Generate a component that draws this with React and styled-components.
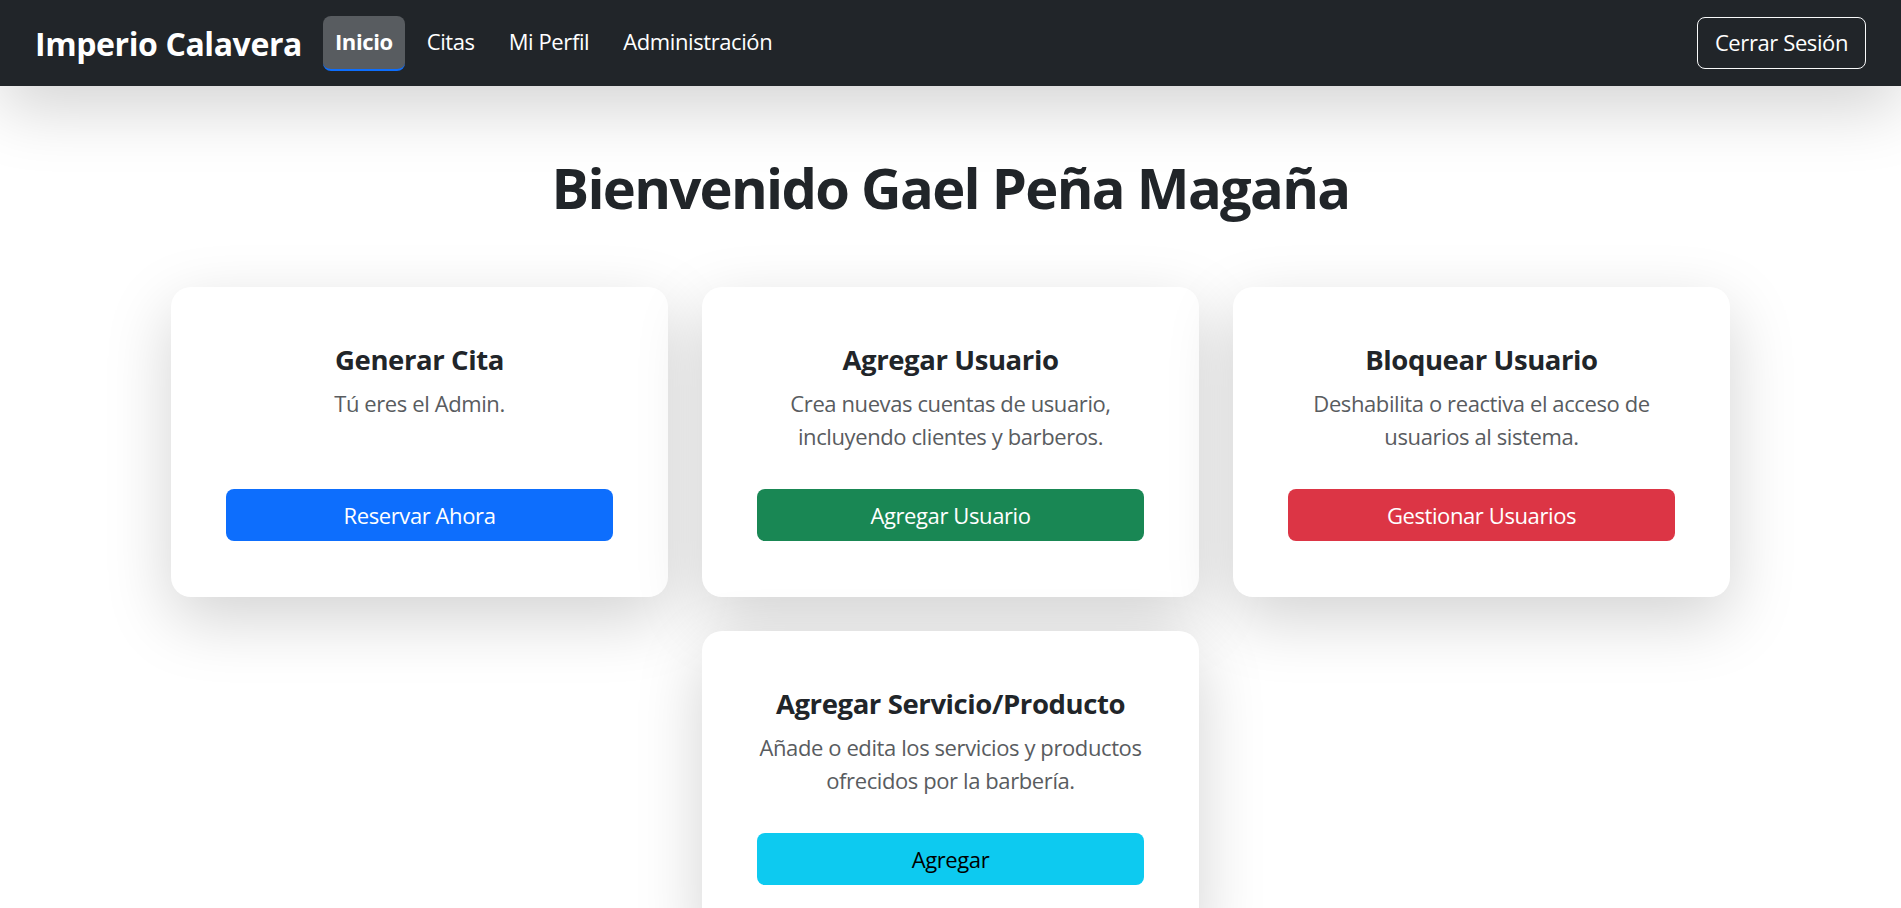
import React from "react";
import styled, { createGlobalStyle } from "styled-components";

const GlobalStyle = createGlobalStyle`
  * {
    box-sizing: border-box;
  }

  body {
    margin: 0;
    background: #ffffff;
    font-family: "Segoe UI", "Open Sans", "Noto Sans", sans-serif;
    letter-spacing: -0.025em;
    color: #212529;
  }

  button {
    letter-spacing: inherit;
  }
`;

const cards = [
  {
    title: "Generar Cita",
    text: "Tú eres el Admin.",
    action: "Reservar Ahora",
    variant: "primary",
  },
  {
    title: "Agregar Usuario",
    text: "Crea nuevas cuentas de usuario, incluyendo clientes y barberos.",
    action: "Agregar Usuario",
    variant: "success",
  },
  {
    title: "Bloquear Usuario",
    text: "Deshabilita o reactiva el acceso de usuarios al sistema.",
    action: "Gestionar Usuarios",
    variant: "danger",
  },
  {
    title: "Agregar Servicio/Producto",
    text: "Añade o edita los servicios y productos ofrecidos por la barbería.",
    action: "Agregar",
    variant: "info",
  },
];

const variants = {
  primary: { bg: "#0d6efd", color: "#ffffff" },
  success: { bg: "#198754", color: "#ffffff" },
  danger: { bg: "#dc3545", color: "#ffffff" },
  info: { bg: "#0dcaf0", color: "#000000" },
};

const links = ["Inicio", "Citas", "Mi Perfil", "Administración"];

const App = () => {
  return (
    <Page>
      <GlobalStyle />
      <Navbar>
        <Brand>Imperio Calavera</Brand>
        <NavList>
          {links.map((label, i) => (
            <NavLink key={label} $active={i === 0}>
              {label}
            </NavLink>
          ))}
        </NavList>
        <LogoutButton>Cerrar Sesión</LogoutButton>
      </Navbar>

      <Main>
        <Heading>Bienvenido Gael Peña Magaña</Heading>
        <CardGrid>
          {cards.map((card) => (
            <Card key={card.title}>
              <CardTitle>{card.title}</CardTitle>
              <CardText>{card.text}</CardText>
              <ActionButton $variant={card.variant}>{card.action}</ActionButton>
            </Card>
          ))}
        </CardGrid>
      </Main>
    </Page>
  );
};

export default App;

const Page = styled.div`
  min-height: 100vh;
  overflow: hidden;
`;

const Navbar = styled.nav`
  position: relative;
  z-index: 2;
  height: 86px;
  padding: 0 35px;
  display: flex;
  align-items: center;
  background-color: #212529;
  box-shadow: 0 22px 66px rgba(0, 0, 0, 0.175);
`;

const Brand = styled.a`
  font-size: 32px;
  font-weight: 700;
  color: #ffffff;
  margin-right: 21px;
  white-space: nowrap;
`;

const NavList = styled.div`
  display: flex;
  align-items: center;
  gap: 10px;
`;

const NavLink = styled.a`
  padding: 9px 12px 11px;
  font-size: 22px;
  line-height: 33px;
  color: #ffffff;
  border-radius: 8px;
  border-bottom: 2px solid transparent;
  font-weight: ${(p) => (p.$active ? 700 : 400)};
  background-color: ${(p) => (p.$active ? "#585c60" : "transparent")};
  border-bottom-color: ${(p) => (p.$active ? "#0d6efd" : "transparent")};
`;

const LogoutButton = styled.button`
  margin-left: auto;
  height: 52px;
  padding: 0 17px 2px;
  font-family: inherit;
  font-size: 22px;
  color: #ffffff;
  background: transparent;
  border: 1px solid #f8f9fa;
  border-radius: 8px;
`;

const Main = styled.main`
  padding-top: 68px;
  text-align: center;
`;

const Heading = styled.h1`
  margin: 0 0 66px;
  font-size: 56px;
  line-height: 1.2;
  font-weight: 700;
  letter-spacing: -0.03em;
  color: #212529;
`;

const CardGrid = styled.div`
  width: 1560px;
  margin: 0 auto;
  display: flex;
  flex-wrap: wrap;
  justify-content: center;
  gap: 34px;
`;

const Card = styled.div`
  width: 497px;
  padding: 56px 55px;
  display: flex;
  flex-direction: column;
  align-items: center;
  background-color: #ffffff;
  border-radius: 20px;
  box-shadow: 0 22px 66px rgba(0, 0, 0, 0.175);
`;

const CardTitle = styled.h5`
  margin: 0 0 11px;
  font-size: 27.5px;
  line-height: 33px;
  font-weight: 700;
  color: #212529;
`;

const CardText = styled.p`
  margin: 0 -4px 36px;
  font-size: 22px;
  line-height: 33px;
  color: #595c5f;
`;

const ActionButton = styled.button`
  margin-top: auto;
  width: 100%;
  height: 52px;
  font-family: inherit;
  font-size: 22px;
  border: none;
  border-radius: 8px;
  background-color: ${(p) => variants[p.$variant].bg};
  color: ${(p) => variants[p.$variant].color};
`;
